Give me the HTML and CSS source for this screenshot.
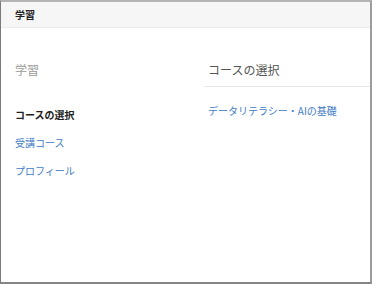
FILE: index.html
```html
<!DOCTYPE html>
<html lang="ja">
<head>
  <meta charset="UTF-8" />
  <meta name="viewport" content="width=device-width, initial-scale=1.0"/>
  <title>学習</title>
  <link rel="stylesheet" href="styles.css">
</head>
<body>
  <div class="window">
    <div class="header">学習</div>

    <div class="main">
      <div class="sidebar">
        <div class="side-title">学習</div>
        <ul class="nav">
          <li class="active">コースの選択</li>
          <li><a href="#">受講コース</a></li>
          <li><a href="#">プロフィール</a></li>
        </ul>
      </div>

      <div class="content">
        <div class="content-title">コースの選択</div>
        <a class="course" href="#">データリテラシー・AIの基礎</a>
      </div>
    </div>
  </div>
</body>
</html>
```

FILE: styles.css
```css
:root {
  --link: #3f7cc4;
  --line: #e6e6e6;
}

* {
  box-sizing: border-box;
}

body {
  margin: 0;
  font-family: "Noto Sans CJK JP", "Noto Sans", sans-serif;
  color: #333;
  background: #fff;
}

.window {
  width: 372px;
  height: 284px;
  border-top: 2px solid #b4b4b4;
  border-left: 1px solid #7a7a7a;
  border-right: 2px solid #9c9c9c;
  border-bottom: 2px solid #858585;
  display: flex;
  flex-direction: column;
}

.header {
  height: 26px;
  display: flex;
  align-items: center;
  padding-left: 14px;
  background: #f6f6f6;
  border-bottom: 1px solid #ececec;
  font-size: 10px;
  font-weight: bold;
  color: #222;
}

.main {
  flex: 1;
  display: grid;
  grid-template-columns: 203px 1fr;
}

.sidebar {
  padding: 34px 0 0 14px;
}

.side-title {
  font-size: 12px;
  line-height: 16px;
  color: #9a9a9a;
}

.nav {
  list-style: none;
  margin: 29px 0 0;
  padding: 0;
  display: flex;
  flex-direction: column;
  gap: 12px;
  font-size: 10px;
  line-height: 16px;
}

.nav .active {
  font-weight: bold;
  color: #222;
}

a {
  color: var(--link);
  text-decoration: none;
}

.content {
  padding-top: 34px;
  display: flex;
  flex-direction: column;
  align-items: flex-start;
}

.content-title {
  align-self: stretch;
  padding: 0 0 8px 4px;
  font-size: 12px;
  line-height: 16px;
  color: #555;
  border-bottom: 1px solid var(--line);
}

.course {
  margin: 17px 0 0 4px;
  font-size: 10px;
  line-height: 14px;
}
```
